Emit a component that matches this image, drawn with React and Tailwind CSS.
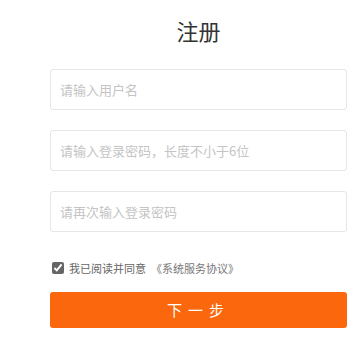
const fields = [
  { type: 'text', placeholder: '请输入用户名' },
  { type: 'password', placeholder: '请输入登录密码，长度不小于6位' },
  { type: 'password', placeholder: '请再次输入登录密码' },
];

const App = () => {
  return (
    <div className="w-[360px] h-[348px] bg-white pl-[50px] pr-[13px] pt-[15px] font-['Microsoft_YaHei','Noto_Sans_CJK_SC',sans-serif]">
      <h2 className="h-[30px] leading-[30px] text-center text-[22px] text-[#333]">注册</h2>

      <form className="mt-6 flex flex-col gap-5" onSubmit={(e) => e.preventDefault()}>
        {fields.map((f) => (
          <input
            key={f.placeholder}
            type={f.type}
            placeholder={f.placeholder}
            className="h-[41px] w-full rounded-[3px] border border-[#e6e6e6] px-[9px] text-[13px] text-[#333] outline-none placeholder:text-[#c4c4c4]"
          />
        ))}
      </form>

      <label className="mt-7 flex h-4 items-center text-[11px] text-[#666]">
        <input type="checkbox" defaultChecked className="ml-[2px] h-[12px] w-[12px] accent-[#666] m-0" />
        <span className="ml-[5px]">我已阅读并同意</span>
        <span className="ml-[5px] text-[#777]">《系统服务协议》</span>
      </label>

      <button
        type="button"
        className="mt-4 h-9 w-full rounded-[3px] bg-[#fa670d] text-[15px] tracking-[6px] text-white"
      >
        下一步
      </button>
    </div>
  );
};

export default App;
